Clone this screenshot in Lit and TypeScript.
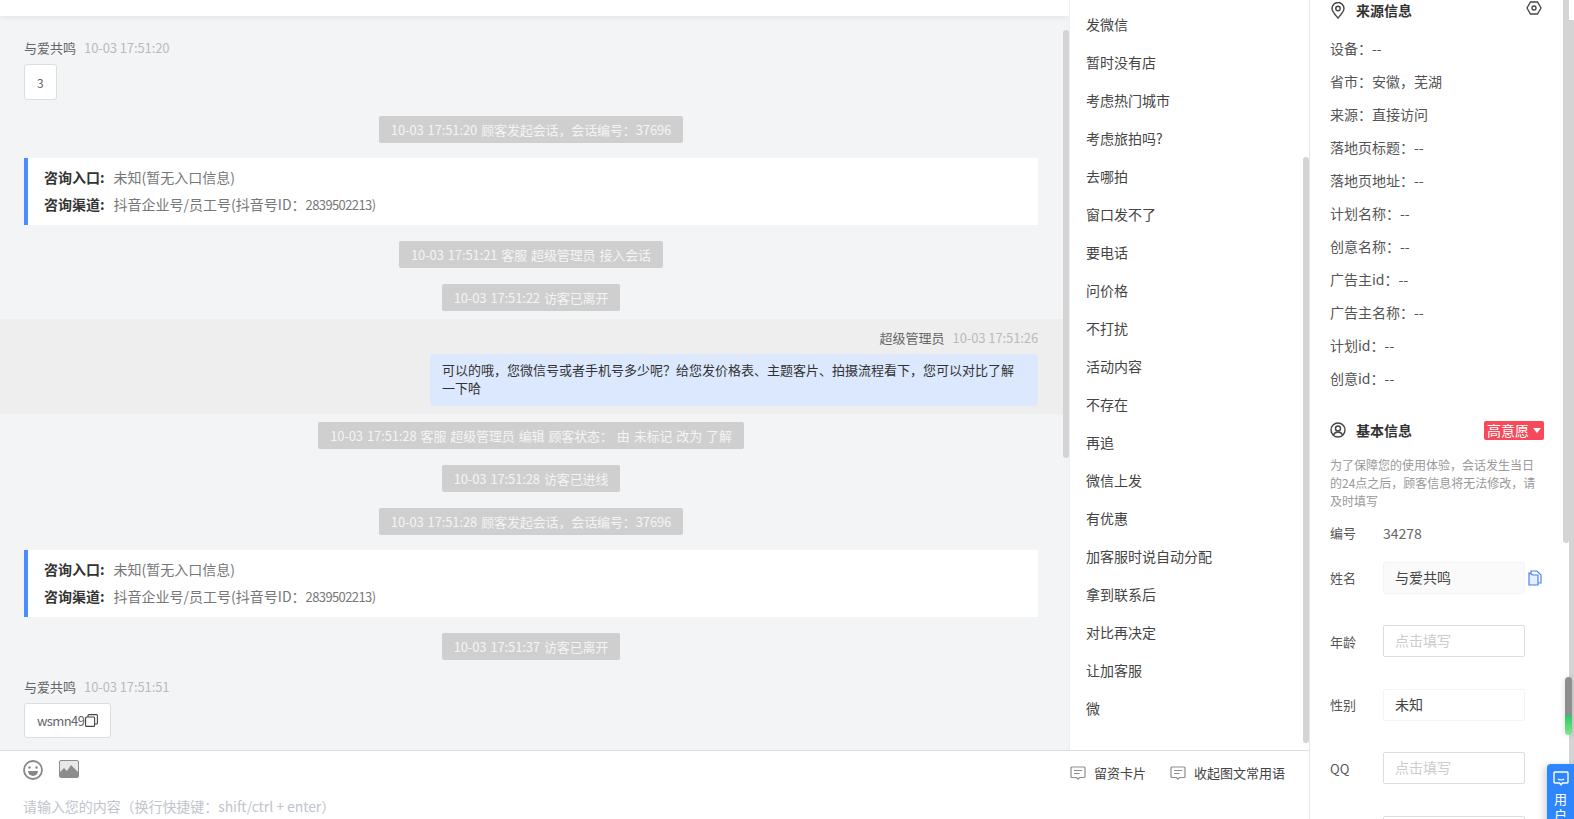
import { LitElement, html, css, svg } from "lit";
import { customElement } from "lit/decorators.js";

const phrases = ["发微信","暂时没有店","考虑热门城市","考虑旅拍吗?","去哪拍","窗口发不了","要电话","问价格","不打扰","活动内容","不存在","再追","微信上发","有优惠","加客服时说自动分配","拿到联系后","对比再决定","让加客服","微"];
const sources = [["设备","--"],["省市","安徽，芜湖"],["来源","直接访问"],["落地页标题","--"],["落地页地址","--"],["计划名称","--"],["创意名称","--"],["广告主id","--"],["广告主名称","--"],["计划id","--"],["创意id","--"]];

const chatIcon = svg`<svg viewBox="0 0 16 16" width="16" height="16" fill="none" stroke="#8c8c8c" stroke-width="1.2"><path d="M2 2h12a1 1 0 0 1 1 1v8.500a1 1 0 0 1-1 1H9.500L8 14.200 6.500 12.500H2a1 1 0 0 1-1-1V3a1 1 0 0 1 1-1z"/><path d="M4 5.500h8M4 8.500h5.500"/></svg>`;

@customElement("app-root")
export class AppRoot extends LitElement {
  static styles = css`
    :host { display: block; width: 1574px; height: 819px; overflow: hidden; position: relative; background: #fff;
      font-family: "Noto Sans CJK SC", "Liberation Sans", sans-serif; font-size: 13px; color: #333; }
    * { box-sizing: border-box; }
    .page { display: flex; width: 100%; height: 100%; }
    .left { width: 1309px; flex: none; display: flex; flex-direction: column; }
    .upper { display: flex; height: 750px; flex: none; }
    .chat { width: 1069px; flex: none; background: #f3f4f6; position: relative; overflow: hidden; }
    .topbar { height: 16px; background: #fff; box-shadow: 0 1px 6px rgba(0,0,0,.08); position: relative; }
    .msgs { padding-top: 22px; display: flex; flex-direction: column; width: 1062px; }
    .meta { height: 20px; line-height: 20px; padding: 0 24px; color: #666; white-space: nowrap; }
    .meta .t { color: #bbb; margin-left: 8px; letter-spacing: -.1px; }
    .bubble { align-self: flex-start; margin: 6px 0 0 24px; height: 36px; padding: 0 12px; background: #fff; border: 1px solid #ddd; border-radius: 3px; color: #666; display: flex; align-items: center; font-size: 12px; }
    .bubble.code { height: 35px; margin-top: 6px; letter-spacing: -.6px; font-size: 13px; }
    .bubble.code svg { margin-left: 1px; }
    .sys { align-self: center; height: 27px; line-height: 27px; padding: 0 12px; background: #cfcfcf; color: #f4f4f4; border-radius: 2px; white-space: nowrap; letter-spacing: -.12px; word-spacing: 1.200px; }
    .m16 { margin-top: 16px; }
    .m8 { margin-top: 8px; }
    .card { margin: 15px 24px 0; height: 67px; background: #fff; border-left: 4px solid #4a8cff; padding: 6px 16px 7px; line-height: 27px; font-size: 14px; color: #777; white-space: nowrap; }
    .card b { color: #333; font-weight: 700; margin-right: 9px; }
    .num { font-size: 13px; letter-spacing: -.6px; }
    .hl { background: #eee; width: 1069px; margin-top: 8px; height: 95px; padding: 9px 31px 0 0; display: flex; flex-direction: column; align-items: flex-end; }
    .hl .meta { padding: 0; }
    .blue { width: 608px; margin-top: 6px; height: 52px; background: #dce8fd; border-radius: 4px; padding: 7px 12px; line-height: 18px; color: #333; }
    .lastmeta { margin-top: 17px; }
    .sb { position: absolute; width: 6px; background: #d4d4d4; border-radius: 3px; }
    .phr { flex: 1; border-left: 1px solid #eee; padding: 5px 0 0 16px; position: relative; overflow: hidden; }
    .phr div.it { height: 38px; line-height: 38px; font-size: 14px; color: #444; }
    .input { flex: 1; border-top: 1px solid #ddd; padding: 9px 24px 0 23px; }
    .tools { display: flex; justify-content: space-between; height: 28px; }
    .tl { display: flex; gap: 16px; align-items: flex-start; }
    .tr { display: flex; gap: 24px; padding-top: 2px; }
    .tbtn { display: flex; align-items: center; gap: 8px; height: 20px; color: #444; }
    .tbtn svg { margin-top: 2px; }
    .ph { color: #c0c4cc; margin-top: 8px; line-height: 20px; font-size: 14px; letter-spacing: -.06px; }
    .right { flex: 1; border-left: 1px solid #e6e6e6; padding-left: 20px; position: relative; overflow: hidden; }
    .head { display: flex; align-items: center; height: 20px; width: 217px; font-weight: 700; font-size: 14px; color: #333; gap: 10px; }
    .head .sp { flex: 1; }
    .row { height: 33px; line-height: 33px; font-size: 14px; color: #555; white-space: nowrap; }
    .srcs { margin-top: 12px; }
    .h2 { margin-top: 25px; }
    .hex { margin: -5px 5px 0 0; }
    .badge { background: #f6495a; color: #fff; height: 19px; width: 60px; border-radius: 2px; font-weight: 400; display: flex; align-items: center; justify-content: center; gap: 4px; margin-right: 3px; }
    .tri { width: 0; height: 0; border-left: 4px solid transparent; border-right: 4px solid transparent; border-top: 5px solid #fff; }
    .note { margin-top: 16px; font-size: 12px; line-height: 18px; color: #999; width: 212px; }
    .no { display: flex; height: 24px; line-height: 24px; margin-top: 11px; font-size: 14px; color: #666; }
    .lb { width: 53px; flex: none; color: #555; font-size: 13px; }
    .f { display: flex; align-items: center; height: 32px; margin-bottom: 31.500px; }
    .fields { margin-top: 16.750px; }
    .box { width: 142px; height: 32px; line-height: 28px; padding: 0 11px; border-radius: 2px; border: 1px solid #ddd; color: #ccc; flex: none; font-size: 14px; }
    .box.ro { border-color: #f4f4f4; color: #444; }
    .box.fill { background: #fafafa; }
    .copy { margin-left: 3px; }
    .vol { position: absolute; left: 1565px; top: 677px; width: 7px; height: 58px; border-radius: 4px; overflow: hidden; background: linear-gradient(#8e8e8e 65%, #2fc462 65%, #7ce88f); box-shadow: 0 0 6px rgba(0,0,0,.15); }
    .widget { position: absolute; left: 1547px; top: 764px; width: 27px; height: 70px; background: #2e86ff; border-radius: 4px 0 0 0; color: #fff; font-size: 13px; line-height: 16px; text-align: center; padding-top: 7px; box-shadow: -2px 2px 8px rgba(0,0,0,.2); }
    .widget svg { display: block; margin: 0 auto 5px; }
  `;

  sys(t: string, c = "m16") { return html`<div class="sys ${c}">${t}</div>`; }
  card() {
    return html`<div class="card"><div><b>咨询入口:</b>未知(暂无入口信息)</div><div><b>咨询渠道:</b>抖音企业号/员工号(抖音号ID：<span class="num">2839502213)</span></div></div>`;
  }

  render() {
    return html`<div class="page">
      <div class="left">
        <div class="upper">
          <div class="chat">
            <div class="topbar"></div>
            <div class="msgs">
              <div class="meta">与爱共鸣<span class="t">10-03 17:51:20</span></div>
              <div class="bubble">3</div>
              ${this.sys("10-03 17:51:20 顾客发起会话，会话编号：37696")}
              ${this.card()}
              ${this.sys("10-03 17:51:21 客服 超级管理员 接入会话")}
              ${this.sys("10-03 17:51:22 访客已离开")}
              <div class="hl">
                <div class="meta">超级管理员<span class="t">10-03 17:51:26</span></div>
                <div class="blue">可以的哦，您微信号或者手机号多少呢？给您发价格表、主题客片、拍摄流程看下，您可以对比了解一下哈</div>
              </div>
              ${this.sys("10-03 17:51:28 客服 超级管理员 编辑 顾客状态： 由 未标记 改为 了解", "m8")}
              ${this.sys("10-03 17:51:28 访客已进线")}
              ${this.sys("10-03 17:51:28 顾客发起会话，会话编号：37696")}
              ${this.card()}
              ${this.sys("10-03 17:51:37 访客已离开")}
              <div class="meta lastmeta">与爱共鸣<span class="t">10-03 17:51:51</span></div>
              <div class="bubble code">wsmn49<svg width="13" height="13" viewBox="0 0 13 13" fill="none" stroke="#444" stroke-width="1.100"><rect x=".6" y="3" width="9" height="9.400" rx="1"/><path d="M3 3V1.600a1 1 0 0 1 1-1h7.400a1 1 0 0 1 1 1v7.400a1 1 0 0 1-1 1H9.600"/></svg></div>
            </div>
            <div class="sb" style="left:1063px;top:30px;height:428px"></div>
          </div>
          <div class="phr">
            ${phrases.map(p => html`<div class="it">${p}</div>`)}
            <div class="sb" style="left:233px;top:157px;height:586px"></div>
          </div>
        </div>
        <div class="input">
          <div class="tools">
            <div class="tl">
              <svg width="20" height="20" viewBox="0 0 20 20" fill="none" stroke="#888" stroke-width="1.800"><circle cx="10" cy="10" r="9"/><circle cx="6.500" cy="7.500" r="1.200" fill="#888" stroke="none"/><circle cx="13.500" cy="7.500" r="1.200" fill="#888" stroke="none"/><path d="M5 11h10a5 5 0 0 1-10 0z" fill="#888" stroke="none"/></svg>
              <svg width="20" height="18" viewBox="0 0 20 18"><rect x=".5" y=".5" width="19" height="17" rx="1.500" fill="#e8e8e8" stroke="#8c8c8c"/><path d="M1 17V12l4-4 3 3 4-6 7 7v5z" fill="#8c8c8c"/></svg>
            </div>
            <div class="tr">
              <div class="tbtn">${chatIcon}留资卡片</div>
              <div class="tbtn">${chatIcon}收起图文常用语</div>
            </div>
          </div>
          <div class="ph">请输入您的内容（换行快捷键：shift/ctrl + enter）</div>
        </div>
      </div>
      <div class="right">
        <div class="head">
          <svg width="16" height="17" viewBox="-1 0 16 17" fill="none" stroke="#444" stroke-width="1.400"><path d="M7 16C3.500 12 1 9.500 1 6.500a6 6 0 0 1 12 0C13 9.500 10.500 12 7 16z"/><circle cx="7" cy="6.500" r="2.200"/></svg>
          来源信息<span class="sp"></span>
          <svg class="hex" width="16" height="14" viewBox="0 0 16 14" fill="none" stroke="#444" stroke-width="1.300"><path d="M4.500 1h7L15 7l-3.500 6h-7L1 7z"/><circle cx="8" cy="7" r="2"/></svg>
        </div>
        <div class="srcs">${sources.map(([k, v]) => html`<div class="row">${k}：${v}</div>`)}</div>
        <div class="head h2">
          <svg width="16" height="16" viewBox="0 0 16 16" fill="none" stroke="#444" stroke-width="1.400"><circle cx="8" cy="8" r="7"/><circle cx="8" cy="6.500" r="2.500"/><path d="M3.500 13c.8-2 2.500-3 4.500-3s3.700 1 4.500 3"/></svg>
          基本信息<span class="sp"></span>
          <span class="badge">高意愿<i class="tri"></i></span>
        </div>
        <div class="note">为了保障您的使用体验，会话发生当日的24点之后，顾客信息将无法修改，请及时填写</div>
        <div class="no"><span class="lb">编号</span>34278</div>
        <div class="fields">
          <div class="f"><span class="lb">姓名</span><div class="box ro fill">与爱共鸣</div>
            <svg class="copy" width="14" height="16" viewBox="0 0 14 16" fill="#e6eeff" stroke="#4a80f0" stroke-width="1.200"><path d="M3 1h6l4 4v8H3z" fill="none"/><path d="M1 3v12h9V5H5z"/></svg>
          </div>
          <div class="f"><span class="lb">年龄</span><div class="box">点击填写</div></div>
          <div class="f"><span class="lb">性别</span><div class="box ro">未知</div></div>
          <div class="f"><span class="lb">QQ</span><div class="box">点击填写</div></div>
          <div class="f"><span class="lb"></span><div class="box"></div></div>
        </div>
        <div class="sb" style="left:253px;top:0;height:543px;border-radius:0 0 3px 3px"></div>
        <div class="sb" style="left:259px;top:20px;height:799px;border-radius:0;width:5px"></div>
      </div>
    </div>
    <div class="vol"></div>
    <div class="widget">
      <svg width="16" height="15" viewBox="0 0 16 15" fill="none" stroke="#fff" stroke-width="1.400"><path d="M2 1h12a1 1 0 0 1 1 1v9a1 1 0 0 1-1 1H9.500L8 13.800 6.500 12H2a1 1 0 0 1-1-1V2a1 1 0 0 1 1-1z"/><path d="M5 8c1.500 1 4.500 1 6 0"/></svg>
      用<br>户
    </div>`;
  }
}
